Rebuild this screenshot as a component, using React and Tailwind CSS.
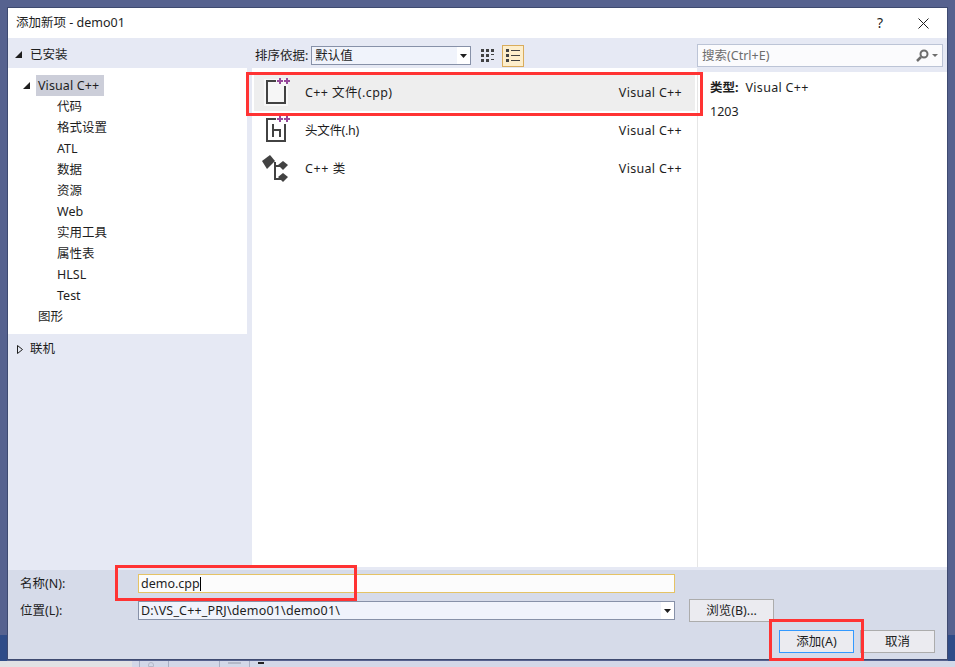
import React from 'react';

const FONT = "font-['Noto_Sans','Noto_Sans_CJK_SC',sans-serif]";

const treeChildren = ['代码', '格式设置', 'ATL', '数据', '资源', 'Web', '实用工具', '属性表', 'HLSL', 'Test'];

const PlusPair = () => (
    <g fill="#96499b">
        <path d="M17 2h2v2h2v2h-2v2h-2v-2h-2v-2h2z" />
        <path d="M24 2h2v2h2v2h-2v2h-2v-2h-2v-2h2z" />
    </g>
);

const CppIcon = () => (
    <svg width="32" height="32" viewBox="0 0 32 32">
        <rect x="2" y="3" width="24" height="27" fill="#f8f8f8" />
        <path d="M14 5H5v22h18V10" fill="#f6f6f6" stroke="#424242" strokeWidth="2" />
        <PlusPair />
    </svg>
);

const HeaderIcon = () => (
    <svg width="32" height="32" viewBox="0 0 32 32">
        <path d="M14 5H5v22h18V10" fill="none" stroke="#424242" strokeWidth="2" />
        <path d="M11 10v13M11 16h7v7" fill="none" stroke="#424242" strokeWidth="2" />
        <PlusPair />
    </svg>
);

const ClassIcon = () => (
    <svg width="32" height="32" viewBox="0 0 32 32">
        <path d="M13 10v17h6M13 14h6" fill="none" stroke="#424242" strokeWidth="2" />
        <path d="M0 9l8-6 5 6-8 8z" fill="#424242" />
        <path d="M16 13l5-4 5 4-5 5z" fill="#424242" />
        <path d="M16 25l5-4 5 4-5 5z" fill="#424242" />
    </svg>
);

const Caret = () => (
    <svg width="7" height="4" viewBox="0 0 7 4"><path d="M0 0h7L3.5 4z" fill="#1e1e1e" /></svg>
);

const TemplateRow = ({ icon, name, selected, nameClass }) => (
    <div className={`flex h-[38px] items-center pl-[8px] pr-[13px] ${selected ? 'bg-[#eeeeee]' : ''}`}>
        <div className="w-[43px]">{icon}</div>
        <span className={`pt-[1px] ${nameClass}`}>{name}</span>
        <span className="ml-auto pt-[1px] tracking-[0.3px]">Visual C++</span>
    </div>
);

const App = () => {
    return (
        <div className={`${FONT} relative h-[667px] w-[955px] overflow-hidden bg-[#56628f] pl-[7px] pt-[7px] text-[12.5px] leading-[16px] text-[#1e1e1e]`}>
            {/* what shows behind the dialog */}
            <div className="absolute left-0 top-[635px] h-[26px] w-[7px] bg-[#2f4c88]" />
            <div className="absolute right-0 top-[635px] h-[26px] w-[7px] bg-[#2f4c88]" />
            <div className="absolute bottom-0 left-0 flex h-[6px] w-[955px]">
                <div className="w-[132px] bg-[#e2e2e4]" />
                <div className="flex-1 bg-[#d3d8e8]">
                    <div className="flex h-full pl-[7px]">
                        <div className="h-full w-px bg-[#a9b0c4]" />
                        <div className="ml-[8px] mt-[1px] h-[5px] w-[6px] rounded-t-full border border-[#b4b9c8]" />
                        <div className="ml-[14px] h-full w-px bg-[#a9b0c4]" />
                        <div className="ml-[50px] h-full w-px bg-[#a9b0c4]" />
                        <div className="ml-[8px] mt-[1px] h-[2px] w-[13px] bg-[#b4b9c8]" />
                        <div className="ml-[8px] h-full w-px bg-[#a9b0c4]" />
                        <div className="ml-[8px] mt-[1px] h-[2px] w-[6px] bg-[#222222]" />
                    </div>
                </div>
            </div>

            <div className="relative flex h-[653px] w-[941px] flex-col border border-[#3e4a70] bg-white">
                {/* title bar */}
                <div className="flex h-[30px] items-center bg-white pl-[8px]">
                    <span>添加新项 - demo01</span>
                    <span className="ml-auto text-[14px]">?</span>
                    <svg className="ml-[35px] mr-[18px]" width="11" height="11" viewBox="0 0 11 11">
                        <path d="M.5.5l10 10M10.5.5l-10 10" stroke="#1e1e1e" strokeWidth="1" />
                    </svg>
                </div>

                {/* body */}
                <div className="flex min-h-0 flex-1 bg-[#e6e9f4]">
                    {/* left tree */}
                    <div className="flex w-[244px] flex-col">
                        <div className="flex h-[30px] items-center pl-[7px] pt-[3px]">
                            <svg width="7" height="7" viewBox="0 0 7 7"><path d="M7 0v7H0z" fill="#1e1e1e" /></svg>
                            <span className="ml-[8px]">已安装</span>
                        </div>
                        <div className="h-[266px] w-[239px] bg-white pt-[7px]">
                            <div className="flex h-[21px] items-center pl-[15px]">
                                <svg width="7" height="7" viewBox="0 0 7 7"><path d="M7 0v7H0z" fill="#1e1e1e" /></svg>
                                <span className="ml-[6px] flex h-[21px] w-[68px] items-center bg-[#ccced9] px-[2px] pt-[1px] tracking-[0.1px]">Visual C++</span>
                            </div>
                            {treeChildren.map((item) => (
                                <div key={item} className="flex h-[21px] items-center pl-[49px]">{item}</div>
                            ))}
                            <div className="flex h-[21px] items-center pl-[30px]">图形</div>
                        </div>
                        <div className="flex h-[30px] items-center pl-[9px]">
                            <svg width="6" height="9" viewBox="0 0 6 9"><path d="M.5.5l5 4-5 4z" fill="none" stroke="#1e1e1e" /></svg>
                            <span className="ml-[7px]">联机</span>
                        </div>
                    </div>

                    {/* center list */}
                    <div className="flex w-[445px] flex-col pb-[3px]">
                        <div className="flex h-[30px] items-center pt-[5px]">
                            <span className="ml-[3px]">排序依据:</span>
                            <div className="ml-[3px] flex h-[19px] w-[160px] items-center border border-[#8791a8] bg-[#f0f3fb] pl-[3px]">
                                <span className="flex-1">默认值</span>
                                <div className="flex h-full w-[13px] items-center justify-center bg-white"><Caret /></div>
                            </div>
                            <svg className="ml-[10px]" width="15" height="15" viewBox="0 0 15 15" fill="#424242">
                                <path d="M0 1h3v3H0zM5 1h3v3H5zM10 1h3v3h-3zM0 6h3v3H0zM5 6h3v3H5zM0 11h3v3H0zM5 11h3v3H5z" />
                                <path d="M10 6h3v1h-3zM10 11h3v1h-3z" />
                            </svg>
                            <div className="ml-[6px] flex h-[22px] w-[22px] items-center justify-center border border-[#d9ac5c] bg-[#fdeecb]">
                                <svg width="14" height="14" viewBox="0 0 14 14" fill="#424242">
                                    <path d="M0 0h3v3H0zM0 5h3v3H0zM0 10h3v3H0zM5 1h9v1H5zM5 6h9v1H5zM5 11h9v1H5z" />
                                </svg>
                            </div>
                        </div>
                        <div className="flex-1 bg-white pl-[2px] pr-[2px] pt-[5px]">
                            <TemplateRow icon={<CppIcon />} name="C++ 文件(.cpp)" nameClass="tracking-[0.4px]" selected />
                            <TemplateRow icon={<HeaderIcon />} name="头文件(.h)" nameClass="tracking-[-0.3px]" />
                            <TemplateRow icon={<ClassIcon />} name="C++ 类" nameClass="tracking-[0.6px]" />
                        </div>
                    </div>

                    {/* right detail */}
                    <div className="flex flex-1 flex-col pb-[3px]">
                        <div className="flex h-[34px] items-center pt-[1px]">
                            <div className="flex h-[23px] w-[246px] items-center border border-[#bcc4d6] bg-[#fbfbfd] pl-[4px] text-[#6d6d6d]">
                                <span className="flex-1">搜索(Ctrl+E)</span>
                                <svg width="14" height="14" viewBox="0 0 14 14">
                                    <circle cx="9" cy="5" r="3.5" fill="none" stroke="#6d6d6d" strokeWidth="2" />
                                    <path d="M6 8l-4 4" stroke="#6d6d6d" strokeWidth="2.5" />
                                </svg>
                                <svg className="ml-[3px] mr-[4px]" width="6" height="3" viewBox="0 0 6 3"><path d="M0 0h6L3 3z" fill="#6d6d6d" /></svg>
                            </div>
                        </div>
                        <div className="flex-1 border-l border-[#e6e6e6] bg-white pl-[12px] pt-[5px]">
                            <div className="flex h-[21px] items-center">
                                <span className="font-bold">类型:</span>
                                <span className="ml-[7px] tracking-[0.3px]">Visual C++</span>
                            </div>
                            <div className="mt-[3px] flex h-[21px] items-center">1203</div>
                        </div>
                    </div>
                </div>

                {/* form */}
                <div className="flex h-[89px] flex-col bg-[#d6dbe9] pl-[12px] pr-[12px]">
                    <div className="mt-[4px] flex h-[19px] items-center">
                        <span className="w-[118px]">名称(N):</span>
                        <div className="flex h-[19px] w-[537px] items-center border border-[#e5c365] bg-[#fcfcfc] pl-[2px]">
                            <span>demo.cpp</span>
                            <span className="h-[14px] w-px bg-black" />
                        </div>
                    </div>
                    <div className="mt-[8px] flex h-[19px] items-center">
                        <span className="w-[118px]">位置(L):</span>
                        <div className="flex h-[19px] w-[537px] items-center border border-[#8791a8] bg-[#f0f3fb] pl-[2px]">
                            <span className="flex-1 tracking-[0.18px]">D:\VS_C++_PRJ\demo01\demo01\</span>
                            <div className="flex h-full w-[13px] items-center justify-center bg-white"><Caret /></div>
                        </div>
                        <button className="ml-[14px] h-[23px] w-[85px] shrink-0 border border-[#acacac] bg-[#ebebf0] text-center">浏览(B)...</button>
                    </div>
                    <div className="mt-[10px] flex justify-end">
                        <button className="h-[23px] w-[75px] border border-[#3399ff] bg-[#ebebf0] text-center">添加(A)</button>
                        <button className="ml-[6px] h-[23px] w-[75px] border border-[#acacac] bg-[#ebebf0] text-center">取消</button>
                    </div>
                </div>
            </div>

            {/* red annotation boxes */}
            <div className="absolute left-[246px] top-[72px] h-[44px] w-[457px] border-[3px] border-[#ff3333]" />
            <div className="absolute left-[115px] top-[565px] h-[36px] w-[242px] border-[3px] border-[#ff3333]" />
            <div className="absolute left-[769px] top-[619px] h-[42px] w-[95px] border-[3px] border-[#ff3333]" />
        </div>
    );
};

export default App;
